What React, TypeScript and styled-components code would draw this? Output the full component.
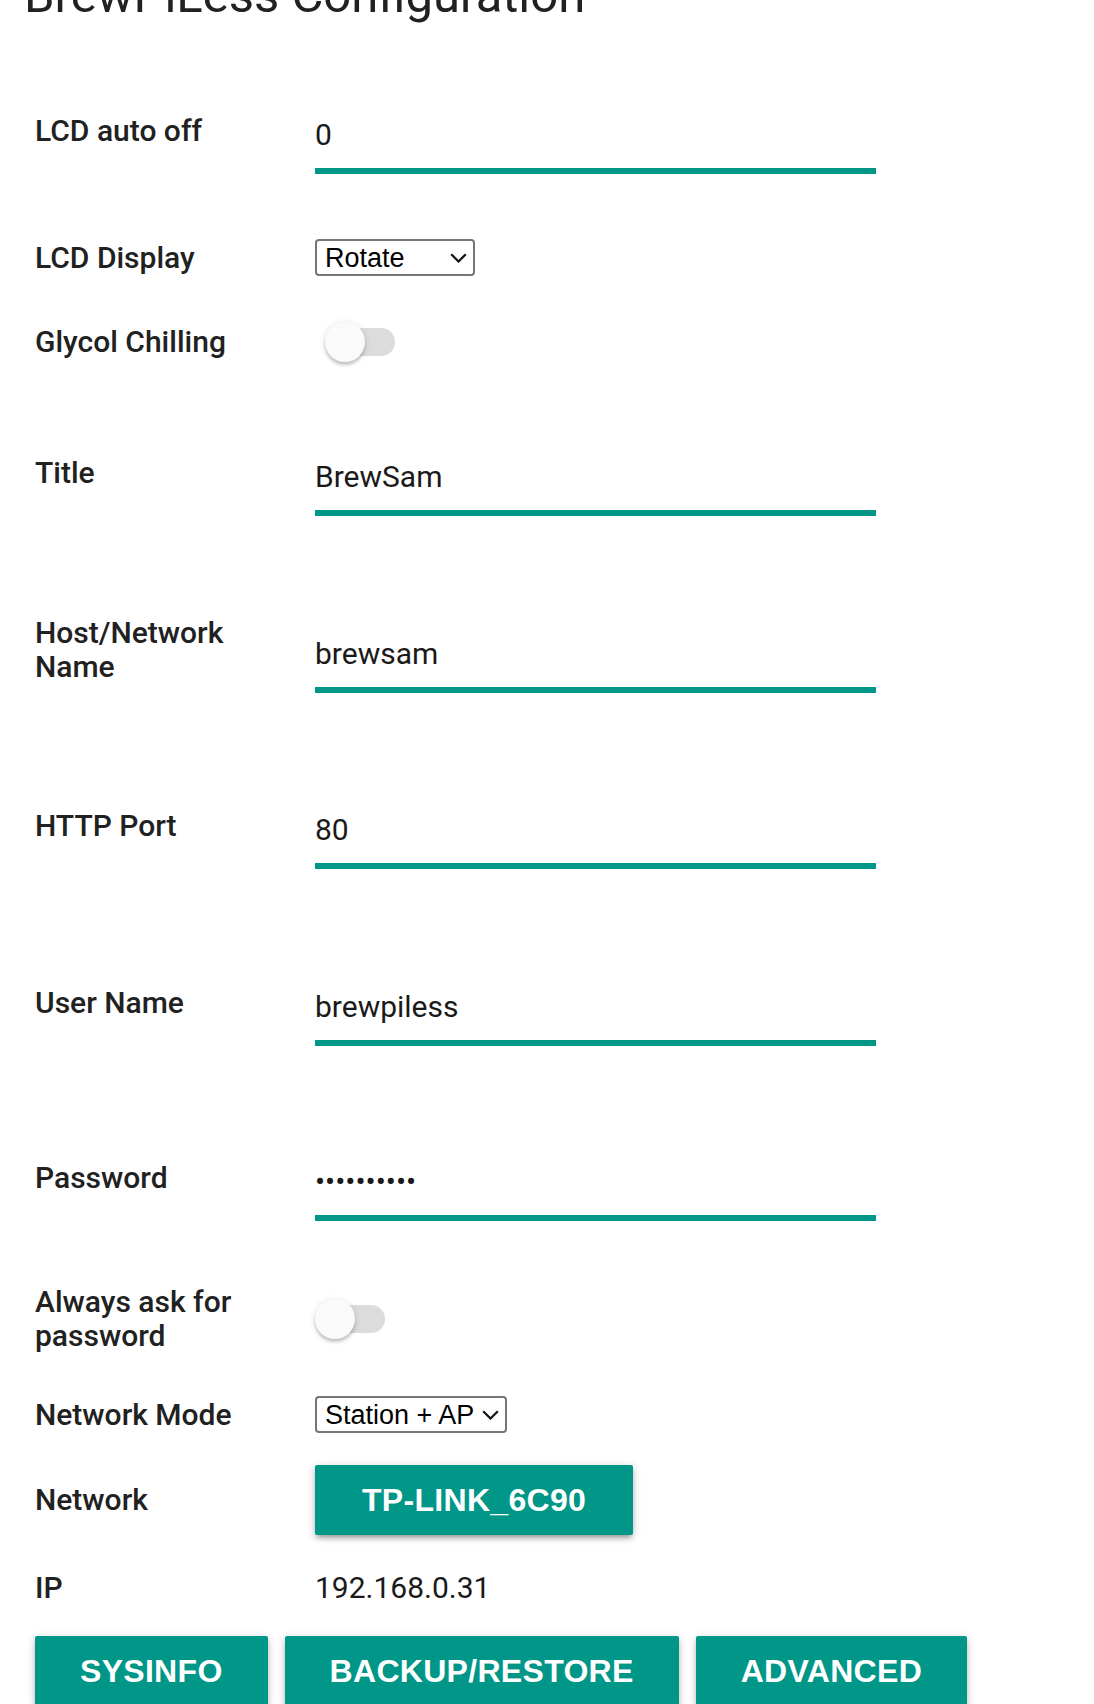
import styled, { createGlobalStyle } from 'styled-components';

const GlobalStyle = createGlobalStyle`
	html,
	body {
		margin: 0;
		padding: 0;
		background: #ffffff;
	}

	body {
		font-family: Roboto, 'Liberation Sans', Arial, sans-serif;
		color: #212121;
		overflow: hidden;
	}
`;

const Page = styled.div`
	margin-top: -32px;
	padding: 0 0 40px 35px;
`;

const Heading = styled.h1`
	margin: 0 0 0 -11px;
	font-size: 49px;
	line-height: 56px;
	font-weight: 400;
	color: #212121;
`;

const Form = styled.div`
	display: flex;
	flex-direction: column;
`;

const Row = styled.div<{ $gap: number }>`
	display: flex;
	align-items: center;
	margin-top: ${(p) => p.$gap}px;
`;

const Label = styled.div`
	width: 280px;
	flex-shrink: 0;
	box-sizing: border-box;
	padding-right: 50px;
	font-size: 30px;
	line-height: 34px;
	font-weight: 500;
	color: #212121;
`;

const TextInput = styled.input`
	width: 561px;
	height: 63px;
	box-sizing: border-box;
	margin: 24px 0 0 0;
	padding: 5px 0 16px 0;
	border: none;
	border-bottom: 6px solid #009688;
	border-radius: 0;
	outline: none;
	background: transparent;
	font-family: Roboto, 'Liberation Sans', Arial, sans-serif;
	font-size: 30px;
	line-height: 36px;
	color: #1a1a1a;
`;

const SelectWrap = styled.div<{ $width: number }>`
	position: relative;
	width: ${(p) => p.$width}px;
	height: 37px;
`;

const Select = styled.select`
	appearance: none;
	width: 100%;
	height: 100%;
	box-sizing: border-box;
	margin: 0;
	padding: 0 0 0 8px;
	border: 2px solid #767676;
	border-radius: 4px;
	background: #ffffff;
	font-family: 'Liberation Sans', Arial, sans-serif;
	font-size: 27px;
	color: #000000;
	outline: none;
`;

const Chevron = styled.svg`
	position: absolute;
	right: 8px;
	top: 14px;
	pointer-events: none;
`;

const Switch = styled.span<{ $offset: number }>`
	position: relative;
	display: inline-block;
	width: 70px;
	height: 40px;
	margin-left: ${(p) => p.$offset}px;
`;

const Track = styled.span`
	position: absolute;
	left: 6px;
	top: 6px;
	width: 64px;
	height: 28px;
	border-radius: 14px;
	background: #dcdcdc;
`;

const Thumb = styled.span`
	position: absolute;
	left: 0;
	top: 0;
	width: 40px;
	height: 40px;
	border-radius: 50%;
	background: #fafafa;
	box-shadow: 0 3px 3px rgba(0, 0, 0, 0.18), 0 1px 7px rgba(0, 0, 0, 0.12);
`;

const TealButton = styled.button<{ $pad?: number }>`
	height: 70px;
	padding: 0 ${(p) => p.$pad ?? 45}px;
	border: none;
	border-radius: 2px;
	background: #009688;
	color: #ffffff;
	font-family: 'Liberation Sans', Arial, sans-serif;
	font-size: 32px;
	font-weight: 700;
	letter-spacing: 0.3px;
	text-transform: uppercase;
	white-space: nowrap;
	cursor: pointer;
	box-shadow: 0 4px 4px rgba(0, 0, 0, 0.14), 0 6px 2px -4px rgba(0, 0, 0, 0.12), 0 2px 10px rgba(0, 0, 0, 0.2);
`;

const Value = styled.div`
	font-size: 30px;
	line-height: 36px;
	color: #1a1a1a;
`;

const ButtonBar = styled.div`
	display: flex;
	gap: 17px;
	margin-top: 30px;
`;

function Dropdown({ width, value, options }: { width: number; value: string; options: string[] }) {
	return (
		<SelectWrap $width={width}>
			<Select defaultValue={value}>
				{options.map((o) => (
					<option key={o} value={o}>
						{o}
					</option>
				))}
			</Select>
			<Chevron width="17" height="10" viewBox="0 0 17 10">
				<path d="M1.2 1.2 L8.5 8.5 L15.8 1.2" fill="none" stroke="#111" strokeWidth="2.2" />
			</Chevron>
		</SelectWrap>
	);
}

function Toggle({ offset = 0 }: { offset?: number }) {
	return (
		<Switch $offset={offset}>
			<Track />
			<Thumb />
		</Switch>
	);
}

export default function App() {
	return (
		<>
			<GlobalStyle />
			<Page>
				<Heading>BrewPiLess Configuration</Heading>
				<Form>
					<Row $gap={63}>
						<Label>LCD auto off</Label>
						<TextInput type="text" defaultValue="0" />
					</Row>
					<Row $gap={65}>
						<Label>LCD Display</Label>
						<Dropdown width={160} value="Rotate" options={['Rotate', 'Always On', 'Off']} />
					</Row>
					<Row $gap={46}>
						<Label>Glycol Chilling</Label>
						<Toggle offset={10} />
					</Row>
					<Row $gap={67}>
						<Label>Title</Label>
						<TextInput type="text" defaultValue="BrewSam" />
					</Row>
					<Row $gap={90}>
						<Label>Host/Network Name</Label>
						<TextInput type="text" defaultValue="brewsam" />
					</Row>
					<Row $gap={89}>
						<Label>HTTP Port</Label>
						<TextInput type="text" defaultValue="80" />
					</Row>
					<Row $gap={90}>
						<Label>User Name</Label>
						<TextInput type="text" defaultValue="brewpiless" />
					</Row>
					<Row $gap={88}>
						<Label>Password</Label>
						<TextInput type="password" defaultValue="brewpiless" />
					</Row>
					<Row $gap={64}>
						<Label>Always ask for password</Label>
						<Toggle />
					</Row>
					<Row $gap={43}>
						<Label>Network Mode</Label>
						<Dropdown width={192} value="Station + AP" options={['Station', 'AP', 'Station + AP']} />
					</Row>
					<Row $gap={32}>
						<Label>Network</Label>
						<TealButton $pad={47}>TP-LINK_6C90</TealButton>
					</Row>
					<Row $gap={35}>
						<Label>IP</Label>
						<Value>192.168.0.31</Value>
					</Row>
				</Form>
				<ButtonBar>
					<TealButton>SYSINFO</TealButton>
					<TealButton>BACKUP/RESTORE</TealButton>
					<TealButton>ADVANCED</TealButton>
				</ButtonBar>
			</Page>
		</>
	);
}
